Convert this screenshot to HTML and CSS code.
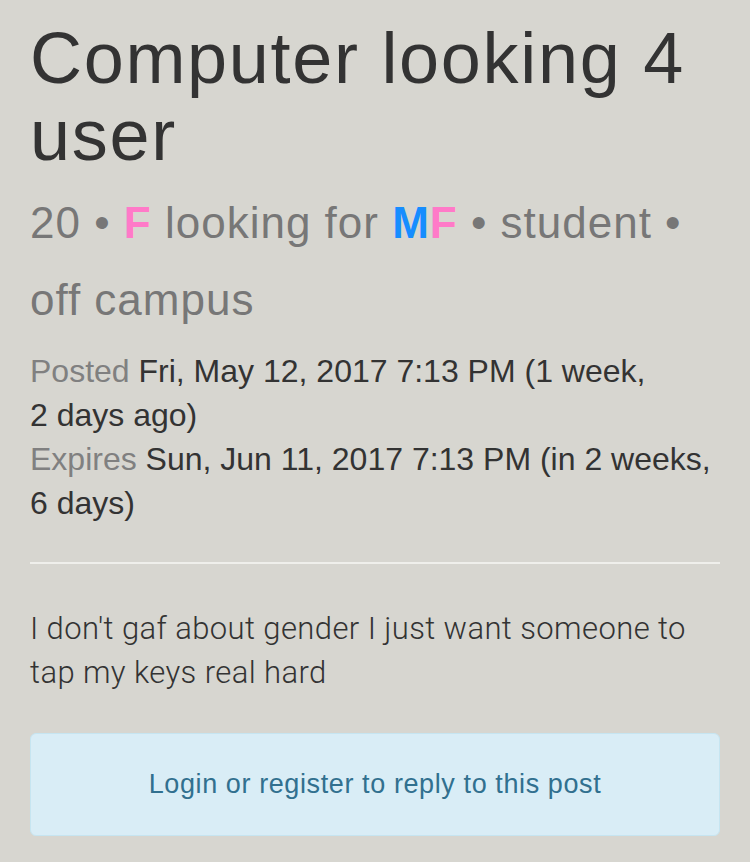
FILE: index.html
```html
<!DOCTYPE html>
<html>
<head>
<meta charset="utf-8">
<link rel="stylesheet" href="styles.css">
</head>
<body>
<div class="post">
  <h1 class="title">Computer looking 4 user</h1>
  <div class="meta">20 • <span class="f">F</span> looking for <span class="m">M</span><span class="f">F</span> • student • off campus</div>
  <div class="dates">
    <div><span class="label">Posted</span> Fri, May 12, 2017 7:13 PM (1 week, 2&nbsp;days ago)</div>
    <div><span class="label">Expires</span> Sun, Jun 11, 2017 7:13 PM (in 2 weeks, 6&nbsp;days)</div>
  </div>
  <hr class="divider">
  <p class="body">I don't gaf about gender I just want someone to tap my keys real hard</p>
  <div class="notice">Login or register to reply to this post</div>
</div>
</body>
</html>
```

FILE: styles.css
```css
html, body {
  margin: 0;
  padding: 0;
  background: #d7d6d0;
}
body {
  font-family: "Liberation Sans", Arial, sans-serif;
  color: #333;
}
.post {
  padding: 20px 30px 0 30px;
}
.title {
  margin: 0;
  font-size: 72px;
  line-height: 77px;
  font-weight: normal;
  letter-spacing: 1.7px;
  color: #333;
}
.meta {
  margin-top: 10px;
  font-size: 44px;
  line-height: 77px;
  letter-spacing: 1px;
  color: #777;
}
.f {
  color: #ff7ac8;
  font-weight: bold;
}
.m {
  color: #168dff;
  font-weight: bold;
}
.dates {
  margin-top: 11px;
  font-size: 32px;
  line-height: 44px;
  letter-spacing: 0;
  color: #333;
}
.label {
  color: #808080;
}
.divider {
  margin: 37px 0 0 0;
  border: 0;
  height: 2px;
  background: #efefeb;
}
.body {
  margin: 43px 0 0 0;
  font-family: Roboto, "Liberation Sans", sans-serif;
  font-weight: 300;
  font-size: 31px;
  line-height: 44px;
  letter-spacing: 0.4px;
  color: #333;
}
.notice {
  margin-top: 38px;
  border: 1px solid #c6e5f1;
  background: #d9edf6;
  border-radius: 6px;
  padding: 31px 15px;
  text-align: center;
  font-size: 27px;
  line-height: 39px;
  letter-spacing: 0.6px;
  color: #31708f;
}
```
